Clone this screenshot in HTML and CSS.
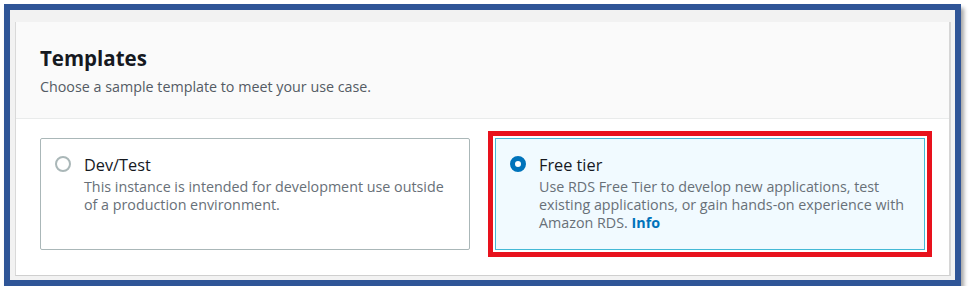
FILE: index.html
```html
<!DOCTYPE html>
<html lang="en">
<head>
<meta charset="utf-8">
<title>Templates</title>
<link rel="stylesheet" href="styles.css">
</head>
<body>
<div class="frame">
  <section class="panel">
    <header class="panel-header">
      <h2 class="panel-title">Templates</h2>
      <p class="panel-desc">Choose a sample template to meet your use case.</p>
    </header>
    <div class="panel-body">
      <div class="tiles">
        <label class="tile">
          <span class="radio"></span>
          <span class="tile-text">
            <span class="tile-title">Dev/Test</span>
            <span class="tile-desc">This instance is intended for development use outside of a production environment.</span>
          </span>
        </label>
        <label class="tile tile-selected">
          <span class="radio radio-checked"></span>
          <span class="tile-text">
            <span class="tile-title">Free tier</span>
            <span class="tile-desc">Use RDS Free Tier to develop new applications, test existing applications, or gain hands-on experience with Amazon RDS. <a class="info" href="#">Info</a></span>
          </span>
        </label>
      </div>
    </div>
  </section>
</div>
</body>
</html>
```

FILE: styles.css
```css
* { box-sizing: border-box; }
html, body { margin: 0; padding: 0; background: #ffffff; }
body {
  font-family: "Open Sans", "Noto Sans", sans-serif;
  color: #16191f;
}
.frame {
  margin: 4px 0 0 4px;
  width: 957px;
  height: 282px;
  border: 6px solid #2f5597;
  background: #f2f2f2;
  padding: 12px 5px 4px 5px;
  box-shadow: 3px 4px 4px rgba(0, 0, 0, 0.35);
  display: flex;
}
.panel {
  flex: 1;
  background: #ffffff;
  border-left: 1px solid #d9d9d9;
  border-right: 2px solid #d6d6d6;
  border-bottom: 1px solid #cfcfcf;
  display: flex;
  flex-direction: column;
}
.panel-header {
  background: #fafafa;
  height: 97px;
  border-bottom: 1px solid #e9ebeb;
  padding: 22px 24px 0 24px;
}
.panel-title {
  margin: 0;
  font-size: 20.5px;
  line-height: 28px;
  font-weight: 700;
  color: #16191f;
}
.panel-desc {
  margin: 5px 0 0 0;
  font-size: 14.3px;
  line-height: 20px;
  color: #545b64;
}
.panel-body {
  flex: 1;
  padding: 19px 24px 0 24px;
}
.tiles {
  display: grid;
  grid-template-columns: 430px 430px;
  column-gap: 25px;
  height: 112px;
}
.tile {
  display: flex;
  align-items: flex-start;
  gap: 13px;
  border: 1px solid #aab7b8;
  border-radius: 2px;
  padding: 16px 14px 0 14px;
  background: #ffffff;
}
.tile-selected {
  background: #f1faff;
  border-color: #44b9d6;
  border-radius: 0;
  outline: 5px solid #e8121d;
  outline-offset: 2px;
}
.radio {
  flex: none;
  width: 16px;
  height: 16px;
  margin-top: 1px;
  border-radius: 50%;
  border: 2px solid #aab7b8;
  background: #ffffff;
}
.radio-checked {
  border: 5px solid #0073bb;
}
.tile-text {
  display: flex;
  flex-direction: column;
}
.tile-title {
  font-size: 16.3px;
  line-height: 20px;
  color: #16191f;
}
.tile-desc {
  font-size: 14.3px;
  line-height: 18px;
  color: #687078;
  margin-top: 3px;
}
.info {
  color: #0073bb;
  font-weight: 700;
  text-decoration: none;
}
```
